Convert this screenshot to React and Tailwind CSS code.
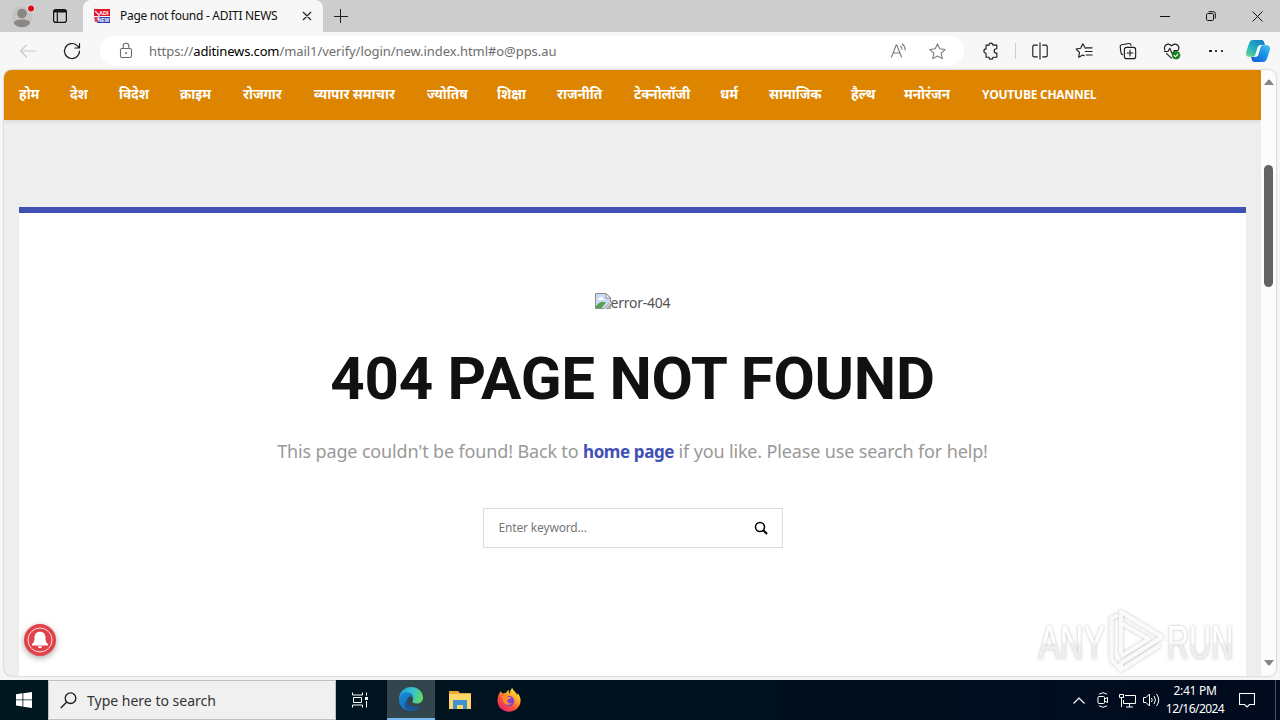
import React from "react";

const NAV = [
  ["होम", "w-[21px]"],
  ["देश", "w-[19px]"],
  ["विदेश", "w-[31px]"],
  ["क्राइम", "w-[33px]"],
  ["रोजगार", "w-[41px]"],
  ["व्यापार समाचार", "w-[83px]"],
  ["ज्योतिष", "w-[40px]"],
  ["शिक्षा", "w-[30px]"],
  ["राजनीति", "w-[47px]"],
  ["टेक्नोलॉजी", "w-[56px]"],
  ["धर्म", "w-[19px]"],
  ["सामाजिक", "w-[52px]"],
  ["हैल्थ", "w-[23px]"],
  ["मनोरंजन", "w-[48px]"],
];

function Icon({ size = 20, className = "", children, sw = 1, stroke = "#1b1b1b" }) {
  return (
    <svg width={size} height={size} viewBox="0 0 20 20" fill="none" stroke={stroke} strokeWidth={sw} strokeLinecap="round" strokeLinejoin="round" className={"shrink-0 " + className}>
      {children}
    </svg>
  );
}

function TabStrip() {
  return (
    <div className="flex h-8 bg-[#cdcdcd]">
      <div className="flex w-[83px] items-center rounded-br-md pl-3">
        <svg width="24" height="28" viewBox="0 0 24 28" className="shrink-0">
          <circle cx="10" cy="15" r="10.5" fill="#c4c4c4" />
          <circle cx="10" cy="11.500" r="4.800" fill="#8b8784" />
          <path d="M2 21.500c0-3 3.200-4 8-4s8 1 8 4c-1.500 2.300-4.600 3.800-8 3.800s-6.500-1.500-8-3.800z" fill="#8b8784" />
          <circle cx="19" cy="6.500" r="4" fill="#dedede" />
          <circle cx="19" cy="6.500" r="3" fill="#d90f1c" />
        </svg>
        <svg width="14" height="14" viewBox="0 0 14 14" className="ml-[17px]" fill="none" stroke="#111">
          <rect x="0.600" y="0.600" width="12.800" height="12.800" rx="2.200" strokeWidth="1.200" />
          <path d="M1 2.300h12" strokeWidth="2.400" />
          <path d="M4.300 3.500v9.500" strokeWidth="1.200" />
        </svg>
      </div>
      <div className="flex w-[240px] items-center rounded-t-lg bg-[#f7f7f7] pl-[11px]">
        <svg width="16" height="16" viewBox="0 0 16 16" className="shrink-0">
          <path d="M0 1h16v7H0z" fill="#e4152b" />
          <path d="M3 9h13v6H3z" fill="#2c3fae" />
          <path d="M0 9h4v5H1z" fill="#d5485a" />
          <path d="M1 3l4 4-1 5" stroke="#f4c6cf" strokeWidth="1.500" fill="none" />
          <text x="5" y="6.900" fontSize="5.600" fontWeight="700" fill="#fff" fontFamily="Liberation Sans">ADI</text>
          <text x="4" y="14" fontSize="4.800" fontWeight="700" fill="#fff" fontFamily="Liberation Sans">NEW</text>
        </svg>
        <span className="ml-[10px] w-[180px] whitespace-nowrap text-[12px] tracking-[-0.280px] text-[#111]">Page not found - ADITI NEWS</span>
        <Icon size={10} sw={2.200} className="ml-[2px]"><path d="M2.500 2.500l15 15M17.500 2.500l-15 15" /></Icon>
      </div>
      <div className="flex flex-1 items-center pl-[11px]">
        <svg width="14" height="14" viewBox="0 0 14 14" stroke="#222"><path d="M6.500 0v14M0 7.500h14" strokeWidth="1" /></svg>
        <div className="ml-auto flex items-center">
          <svg width="10" height="10" viewBox="0 0 10 10" stroke="#111"><path d="M0 5.500h10" /></svg>
          <svg width="10" height="10" viewBox="0 0 10 10" className="ml-9" fill="none" stroke="#111">
            <rect x="0.500" y="2.500" width="7" height="7" rx="1.200" />
            <path d="M2.500 0.700h5q1.800 0 1.800 1.800v5" />
          </svg>
          <svg width="11" height="11" viewBox="0 0 11 11" className="ml-9 mr-[17px]" stroke="#111"><path d="M.5.5l10 10M10.500.5l-10 10" /></svg>
        </div>
      </div>
    </div>
  );
}

function CopilotLogo() {
  return (
    <svg width="26" height="24" viewBox="0 0 26 24" className="shrink-0">
      <defs>
        <linearGradient id="cpa" x1="0" y1="1" x2="1" y2="0">
          <stop offset="0" stopColor="#7bdc7a" />
          <stop offset="0.400" stopColor="#28b3c0" />
          <stop offset="1" stopColor="#1477c9" />
        </linearGradient>
        <linearGradient id="cpb" x1="0" y1="1" x2="1" y2="0">
          <stop offset="0" stopColor="#1457d0" />
          <stop offset="0.600" stopColor="#1f95ea" />
          <stop offset="1" stopColor="#49c8f5" />
        </linearGradient>
      </defs>
      <path d="M8 1h8.500c1.600 0 2.300 1 2.700 2.400L20 6h-4c-2 0-3 1-3.500 2.700L10.200 16c-.4 1.200-1 1.800-2.200 1.800H4.500C1.500 17.800.4 15.500 1.100 13L4 4.500C4.800 2 6 1 8 1z" fill="url(#cpa)" />
      <path d="M18 23H9.500c-1.600 0-2.300-1-2.700-2.400L6 18h4c2 0 3-1 3.500-2.700L15.800 8c.4-1.200 1-1.800 2.200-1.800h3.500c3 0 4.100 2.300 3.400 4.800L22 19.500C21.200 22 20 23 18 23z" fill="url(#cpb)" />
      <path d="M12.500 9.500c.3-1.600 1-2.300 2.300-2.800l.6 1.300-2.300 7.200c-.4 1.200-.9 1.800-1.700 2.200l-.7-1.500z" fill="#f4fbff" />
    </svg>
  );
}

const STAR = "M10 2l2.400 5.200 5.600.7-4.100 3.900 1.100 5.700-5-2.800-5 2.800 1.100-5.700L2 7.900l5.600-.7z";

function Toolbar() {
  return (
    <div className="flex h-[38px] items-center bg-[#f7f7f7]">
      <Icon size={20} stroke="#c9c9c9" sw={1.100} className="ml-[18px]"><path d="M2.500 10h15M8.500 4l-6 6 6 6" /></Icon>
      <Icon size={20} stroke="#1b1b1b" sw={1.200} className="ml-6"><path d="M17.500 10a7.500 7.500 0 1 1-2.300-5.400L17.300 6.800M17.500 2.500v4.500h-4.600" /></Icon>
      <div className="ml-[18px] flex h-[30px] w-[864px] items-center rounded-full bg-white pl-[17px]">
        <svg width="18" height="18" viewBox="0 0 18 18" fill="none" stroke="#6c6c6c" className="shrink-0">
          <rect x="3.500" y="6.500" width="11" height="9" rx="1.500" strokeWidth="1.100" />
          <path d="M6.200 6.300V4a2.800 2.800 0 0 1 5.600 0v2.300" strokeWidth="1.100" />
          <circle cx="9" cy="11" r="1" fill="#6c6c6c" stroke="none" />
        </svg>
        <span className="ml-[14px] mt-px whitespace-nowrap text-[13px] tracking-[-0.060px] text-[#6d6d6d]">
          https://<span className="tracking-[-0.150px] text-black">aditinews.com</span>/mail1/verify/login/new.index.html#o@pps.au
        </span>
        <svg width="18" height="18" viewBox="0 0 18 18" fill="none" stroke="#777" className="ml-auto shrink-0" strokeWidth="1.100" strokeLinecap="round">
          <path d="M1.500 15L6.200 3h.6l4.700 12M3.200 11h6.700M10.500 4.300q1.500 1 1.500 3M12.200 2q3 2 3 6" />
        </svg>
        <Icon size={19} stroke="#777" sw={1.100} className="ml-[20px] mr-[17px]"><path d={STAR} /></Icon>
      </div>
      <Icon size={18} sw={1.250} className="ml-[18px]">
        <path d="M4.500 3.500h3.300a2.200 2.200 0 0 1 4.400 0h4.300V7.500h-.6a2.400 2.400 0 0 0 0 4.800h.6v4.700h-4.300a2.200 2.200 0 0 1-4.400 0H4.500V12.500a2.300 2.300 0 0 1 0-4.800z" />
      </Icon>
      <div className="ml-[15px] h-4 w-px bg-[#cfcfcf]" />
      <Icon size={18} sw={1.250} className="ml-[15px]">
        <path d="M10 1v18M7 3.500H3.500Q2 3.500 2 5v10Q2 16.500 3.500 16.500H7M13 3.500h3.500Q18 3.500 18 5v10q0 1.500-1.500 1.500H13" />
      </Icon>
      <Icon size={18} sw={1.250} className="ml-[26px]">
        <path d="M11.500 7L8.700 2 6.300 7l-5.100.8L5 11.600l-.9 5.400 4.600-2.500 1.500.8M12.500 6.500h6.500M11.500 10.500h7.500M12.500 14.500h6.500" />
      </Icon>
      <Icon size={18} sw={1.250} className="ml-[26px]">
        <path d="M4 14Q2.500 13.500 2.200 12L1.300 5Q1.200 3.300 3 3l8-1.300q2-.2 2.400 2" />
        <rect x="6" y="6" width="12.500" height="12.500" rx="2.500" />
        <path d="M12.250 9v6.500M9 12.250h6.500" />
      </Icon>
      <Icon size={18} sw={1.250} className="ml-[26px]">
        <path d="M2.200 9Q.7 5.500 3.200 3.300q3.300-2.300 6.300 1 3-3.300 6.500-1 2.700 2.200 1.200 5.200M1.500 10.500h4l2-3.500 3 6.500 2-4h4M4 13l5.300 5" />
        <circle cx="14.500" cy="14.700" r="4.300" fill="#13831c" stroke="#13831c" strokeWidth="0.600" />
        <path d="M12.300 14.900l1.500 1.500 2.700-3" stroke="#fff" />
      </Icon>
      <div className="ml-[27px] flex w-4 justify-between px-px">
        <i className="size-[2.500px] rounded-full bg-black" />
        <i className="size-[2.500px] rounded-full bg-black" />
        <i className="size-[2.500px] rounded-full bg-black" />
      </div>
      <div className="ml-[21px]"><CopilotLogo /></div>
    </div>
  );
}

function BrokenImage() {
  return (
    <svg width="16" height="16" viewBox="0 0 16 16" className="-mt-[2px] shrink-0">
      <path d="M.5.500H11L15.500 5v4L9 15.500H.5z" fill="#c9dcf5" stroke="#8d8d8d" />
      <path d="M11 .5V5h4.500z" fill="#fff" stroke="#8d8d8d" />
      <path d="M3 7q0-2 2-2 1-1.500 2.500-.5Q9 5 8.500 7z" fill="#fff" />
      <path d="M1 13q5-6 10-3.500L6.500 15H1z" fill="#58a04c" />
      <path d="M15.500 11v4.500H11z" fill="#9fb99a" stroke="#8d8d8d" strokeWidth=".7" />
    </svg>
  );
}

function Bell() {
  return (
    <div className="absolute left-5 top-[554px] size-8 rounded-full bg-[#e2434b] shadow-[0_2px_6px_rgba(0,0,0,0.350)]">
      <svg width="32" height="32" viewBox="0 0 32 32">
        <circle cx="16" cy="16" r="12" fill="none" stroke="#fbdcdc" strokeWidth="1" />
        <path d="M16 7.800c3.500 0 5.500 2.300 5.500 5.700 0 4 .8 5.300 2.500 6.500v1.500H8V20c1.700-1.200 2.500-2.500 2.500-6.500 0-3.400 2-5.700 5.500-5.700zM13.800 22.300h4.400q-.4 2-2.200 2t-2.200-2z" fill="#fff" />
      </svg>
    </div>
  );
}

function Watermark() {
  return (
    <svg width="220" height="76" viewBox="0 0 220 76" className="absolute left-[1030px] top-[530px]">
      <defs>
        <linearGradient id="wm" x1="0" y1="0" x2="0" y2="1">
          <stop offset="0.500" stopColor="#fff" />
          <stop offset="0.550" stopColor="#eeeeee" />
        </linearGradient>
        <filter id="ws" x="-10%" y="-20%" width="120%" height="140%">
          <feDropShadow dx="0" dy="0" stdDeviation="1.500" floodColor="#777" floodOpacity="0.500" />
        </filter>
      </defs>
      <g filter="url(#ws)" fontFamily="'Liberation Sans',sans-serif" fontSize="49" fill="url(#wm)">
        <text transform="translate(4.500 58.500) scale(0.660 1)">ANY</text>
        <text transform="translate(133 58.500) scale(0.625 1)">RUN</text>
        <g fill="none" stroke="#fafafa" strokeWidth="4" strokeLinejoin="round">
          <path d="M77.500 60V18l7-3M87 54V12l41 25-41 26v7l39-25M87 23l28 16-28 17" />
          <path d="M77.500 60l9 9" />
        </g>
      </g>
    </svg>
  );
}

function Page() {
  return (
    <div className="relative ml-1 flex h-[606px] w-[1272px] overflow-hidden rounded-lg bg-[#eeeeee] shadow-[0_0_2px_rgba(0,0,0,0.350)]">
      <div className="flex w-[1257px] flex-col">
        <nav className="flex h-[50px] shrink-0 items-center gap-[30px] bg-[#dd8500] pl-[15px] text-[13.500px] font-bold text-white shadow-[0_1px_5px_rgba(0,0,0,0.120)]">
          {NAV.map(([label, w]) => (
            <a key={label} className={w + " -mt-0.5 shrink-0 whitespace-nowrap"}>{label}</a>
          ))}
          <a className="whitespace-nowrap font-['Open_Sans'] text-[12px] tracking-[-0.250px]">YOUTUBE CHANNEL</a>
        </nav>
        <main className="ml-[15px] mt-[87px] flex w-[1227px] flex-1 flex-col items-center border-t-[6px] border-[#3f51b5] bg-white pt-20 font-['Noto_Sans',sans-serif]">
          <div className="flex h-[18px] w-[76px] items-center text-[14px] leading-[18px] text-[#555]">
            <BrokenImage />
            <span className="mt-px whitespace-nowrap tracking-[-0.250px]">error-404</span>
          </div>
          <h1 className="mt-[33px] whitespace-nowrap font-['Roboto'] text-[60px] font-bold leading-[70px] tracking-[-0.250px] text-[#111]">404 PAGE NOT FOUND</h1>
          <p className="mt-[24px] whitespace-nowrap text-[18px] leading-[26px] tracking-[-0.150px] text-[#999]">
            This page couldn't be found! Back to <a className="text-[17px] font-bold tracking-[-0.400px] text-[#3f51b5]">home page</a> if you like. Please use search for help!
          </p>
          <div className="mt-[43px] flex h-10 w-[300px] shrink-0 items-center justify-between border border-[#dddddd] pl-[15px] pr-[14px]">
            <span className="text-[12px] tracking-[-0.160px] text-[#777]">Enter keyword...</span>
            <svg width="14" height="14" viewBox="0 0 14 14" fill="none" stroke="#000" strokeWidth="1.500"><circle cx="6" cy="6" r="4.500" /><path d="M9.300 9.300l3.700 3.700" strokeWidth="2" /></svg>
          </div>
        </main>
      </div>
      <div className="flex w-[15px] flex-col items-center bg-[#fcfcfc] pt-[9px]">
        <svg width="10" height="6" viewBox="0 0 10 6"><path d="M0 6l4-5q1-1 2 0l4 5z" fill="#858585" /></svg>
        <div className="mt-[80px] h-[122px] w-[9px] rounded-full bg-[#636363]" />
        <svg width="10" height="6" viewBox="0 0 10 6" className="mb-[10px] mt-auto"><path d="M0 0l4 5q1 1 2 0l4-5z" fill="#858585" /></svg>
      </div>
      <Bell />
      <Watermark />
    </div>
  );
}

function EdgeLogo() {
  return (
    <svg width="26" height="26" viewBox="0 0 26 26">
      <defs>
        <linearGradient id="eg" x1="0" y1="0.300" x2="1" y2="0.500">
          <stop offset="0" stopColor="#229bdc" />
          <stop offset="0.550" stopColor="#34c3cc" />
          <stop offset="1" stopColor="#65d85d" />
        </linearGradient>
        <linearGradient id="eb" x1="0" y1="0" x2="1" y2="1">
          <stop offset="0" stopColor="#1687d2" />
          <stop offset="1" stopColor="#1467b8" />
        </linearGradient>
      </defs>
      <path d="M1 12C2 5 7 1 13 1c7 0 12 5 12 10.500 0 4-3 6-6.500 6-3 0-4.500-1-4-2.200 1.600-2.300.5-6.300-4-6.300C6 9 1.600 11 1 15z" fill="url(#eg)" />
      <path d="M1 13c.5-4 4-6.500 8-6.500 3.500 0 6 2 6.500 4.500C12 8.500 8.500 12 9 16c.6 5 6 8 11.500 5.300C18.500 23.800 16 25 13 25 5.500 25 .5 19 1 13z" fill="url(#eb)" />
      <path d="M9 14c-.6 5 5 9.500 13 5-3 6-9 6.500-12 5-4-2-4.500-7-1-10z" fill="#195695" />
    </svg>
  );
}

function FirefoxLogo() {
  return (
    <svg width="24" height="24" viewBox="0 0 24 24">
      <defs>
        <linearGradient id="ff" x1="0.900" y1="0" x2="0.200" y2="1">
          <stop offset="0" stopColor="#fff04a" />
          <stop offset="0.350" stopColor="#ffae28" />
          <stop offset="0.650" stopColor="#ff5037" />
          <stop offset="1" stopColor="#e62277" />
        </linearGradient>
      </defs>
      <path d="M4 3c.2 1.300.8 2 1.500 2.600C7 5 8.500 5 9 5c1-2 2-2.800 3-3-.5 1.500 0 2.800 1 3.500 0-3 1-4.500 2.500-5.500.3 3 3.500 3.500 4.500 7 .6-.5.700-1.300.6-2C23 8 24 11 23.400 14.500 22.400 20 17.500 23.700 12 23.700 5.500 23.700.500 19 .500 12.500.5 8.500 2 5 4 3z" fill="url(#ff)" />
      <circle cx="12" cy="13" r="5.200" fill="#7a42d8" />
      <path d="M5 8c3-1 5-.5 6 .8 1.500.2 3 .3 3 1-.5 1.600-3 1.200-3.500 2.700-.5 2 2 3.500 4.500 2.500-2 3-8 2.500-9-2z" fill="#ff8b2c" />
    </svg>
  );
}

function Taskbar() {
  return (
    <div className="flex h-10 items-center bg-linear-to-r from-[#001820] to-[#010a1e] text-white">
      <div className="flex w-12 justify-center">
        <svg width="16" height="16" viewBox="0 0 16 16" fill="#fff"><path d="M0 2.200L6.500 1.300v6.200H0zM7.300 1.200L16 0v7.500H7.300zM0 8.300h6.500v6.200L0 13.600zM7.300 8.300H16V16l-8.700-1.300z" /></svg>
      </div>
      <div className="flex h-10 w-72 items-center border border-[#bfbfbf] bg-[#f0f0f0] pl-[11px]">
        <svg width="17" height="17" viewBox="0 0 17 17" fill="none" stroke="#1c1c1c" strokeWidth="1.300"><circle cx="10.500" cy="6.200" r="5.300" /><path d="M6.800 10L.8 16" /></svg>
        <span className="ml-[10px] mt-px whitespace-nowrap text-[14px] text-[#333]">Type here to search</span>
      </div>
      <div className="flex w-[51px] justify-center pr-0.5">
        <svg width="17" height="16" viewBox="0 0 17 16" fill="none" stroke="#fff"><path d="M.5.500v2.500h10V.5M.5 15.500V13h10v2.500M1.500 5.500h8v5h-8zM14.500.500v3M14.500 9v6.500" /><path d="M13 5h3v3h-3z" fill="#fff" stroke="none" /></svg>
      </div>
      <div className="flex h-10 w-12 items-center justify-center border-b-2 border-[#76b9ed] bg-[#33464d]"><EdgeLogo /></div>
      <div className="flex w-[49px] justify-center">
        <svg width="22" height="20" viewBox="0 0 22 20">
          <path d="M0 1h9l2 2h11v16H0z" fill="#e9a934" />
          <path d="M0 4h22v15H0z" fill="#fbd668" />
          <path d="M4 11q0-1 1-1h12q1 0 1 1v8h-4v-4H8v4H4z" fill="#3f92cf" />
        </svg>
      </div>
      <div className="flex w-[50px] justify-center"><FirefoxLogo /></div>
      <div className="ml-auto flex items-center">
        <svg width="12" height="7" viewBox="0 0 12 7" fill="none" stroke="#fff" strokeWidth="1.200"><path d="M.5 6.500L6 1l5.500 5.500" /></svg>
        <svg width="12" height="16" viewBox="0 0 12 16" className="ml-3" fill="none" stroke="#fff"><rect x="1" y="4.500" width="6.500" height="7" rx="1" /><path d="M7.500 7l3-1.500v5l-3-1.500M2 2.200q4-3 8 0M2 13.800q4 3 8 0" /></svg>
        <svg width="17" height="15" viewBox="0 0 17 15" className="ml-[10px]" fill="none" stroke="#fff"><path d="M6 2.500h10.500v8H4.500V7M10.500 10.500v3.500M7 14h7M.5 1.500h4v3h-4zM2.500 4.500V14" /></svg>
        <svg width="17" height="14" viewBox="0 0 17 14" className="ml-[7px]" fill="none" stroke="#fff"><path d="M.5 4.500h2.500l3.500-3.500v12L3 9.500H.5zM8.500 5q1.500 2 0 4M11 3q3 4 0 8M13.500 1q4.500 6 0 12" /></svg>
        <div className="ml-[5px] flex w-[60px] flex-col items-center whitespace-nowrap text-[12px] leading-[18px] tracking-[-0.550px]">
          <span className="tracking-[-0.300px]">2:41 PM</span>
          <span>12/16/2024</span>
        </div>
        <svg width="16" height="16" viewBox="0 0 16 16" className="ml-[14px]" fill="none" stroke="#fff" strokeWidth="1.100"><path d="M.5 1.500h15v11H10.500L8 15l-2.500-2.500h-5z" /></svg>
        <div className="ml-5 mr-1 h-10 w-px bg-[#4a5160]" />
      </div>
    </div>
  );
}

export default function App() {
  return (
    <div className="flex h-[720px] w-[1280px] flex-col overflow-hidden bg-[#f3f5f6] font-['Noto_Sans',sans-serif]">
      <TabStrip />
      <Toolbar />
      <Page />
      <div className="h-1 shrink-0" />
      <Taskbar />
    </div>
  );
}
